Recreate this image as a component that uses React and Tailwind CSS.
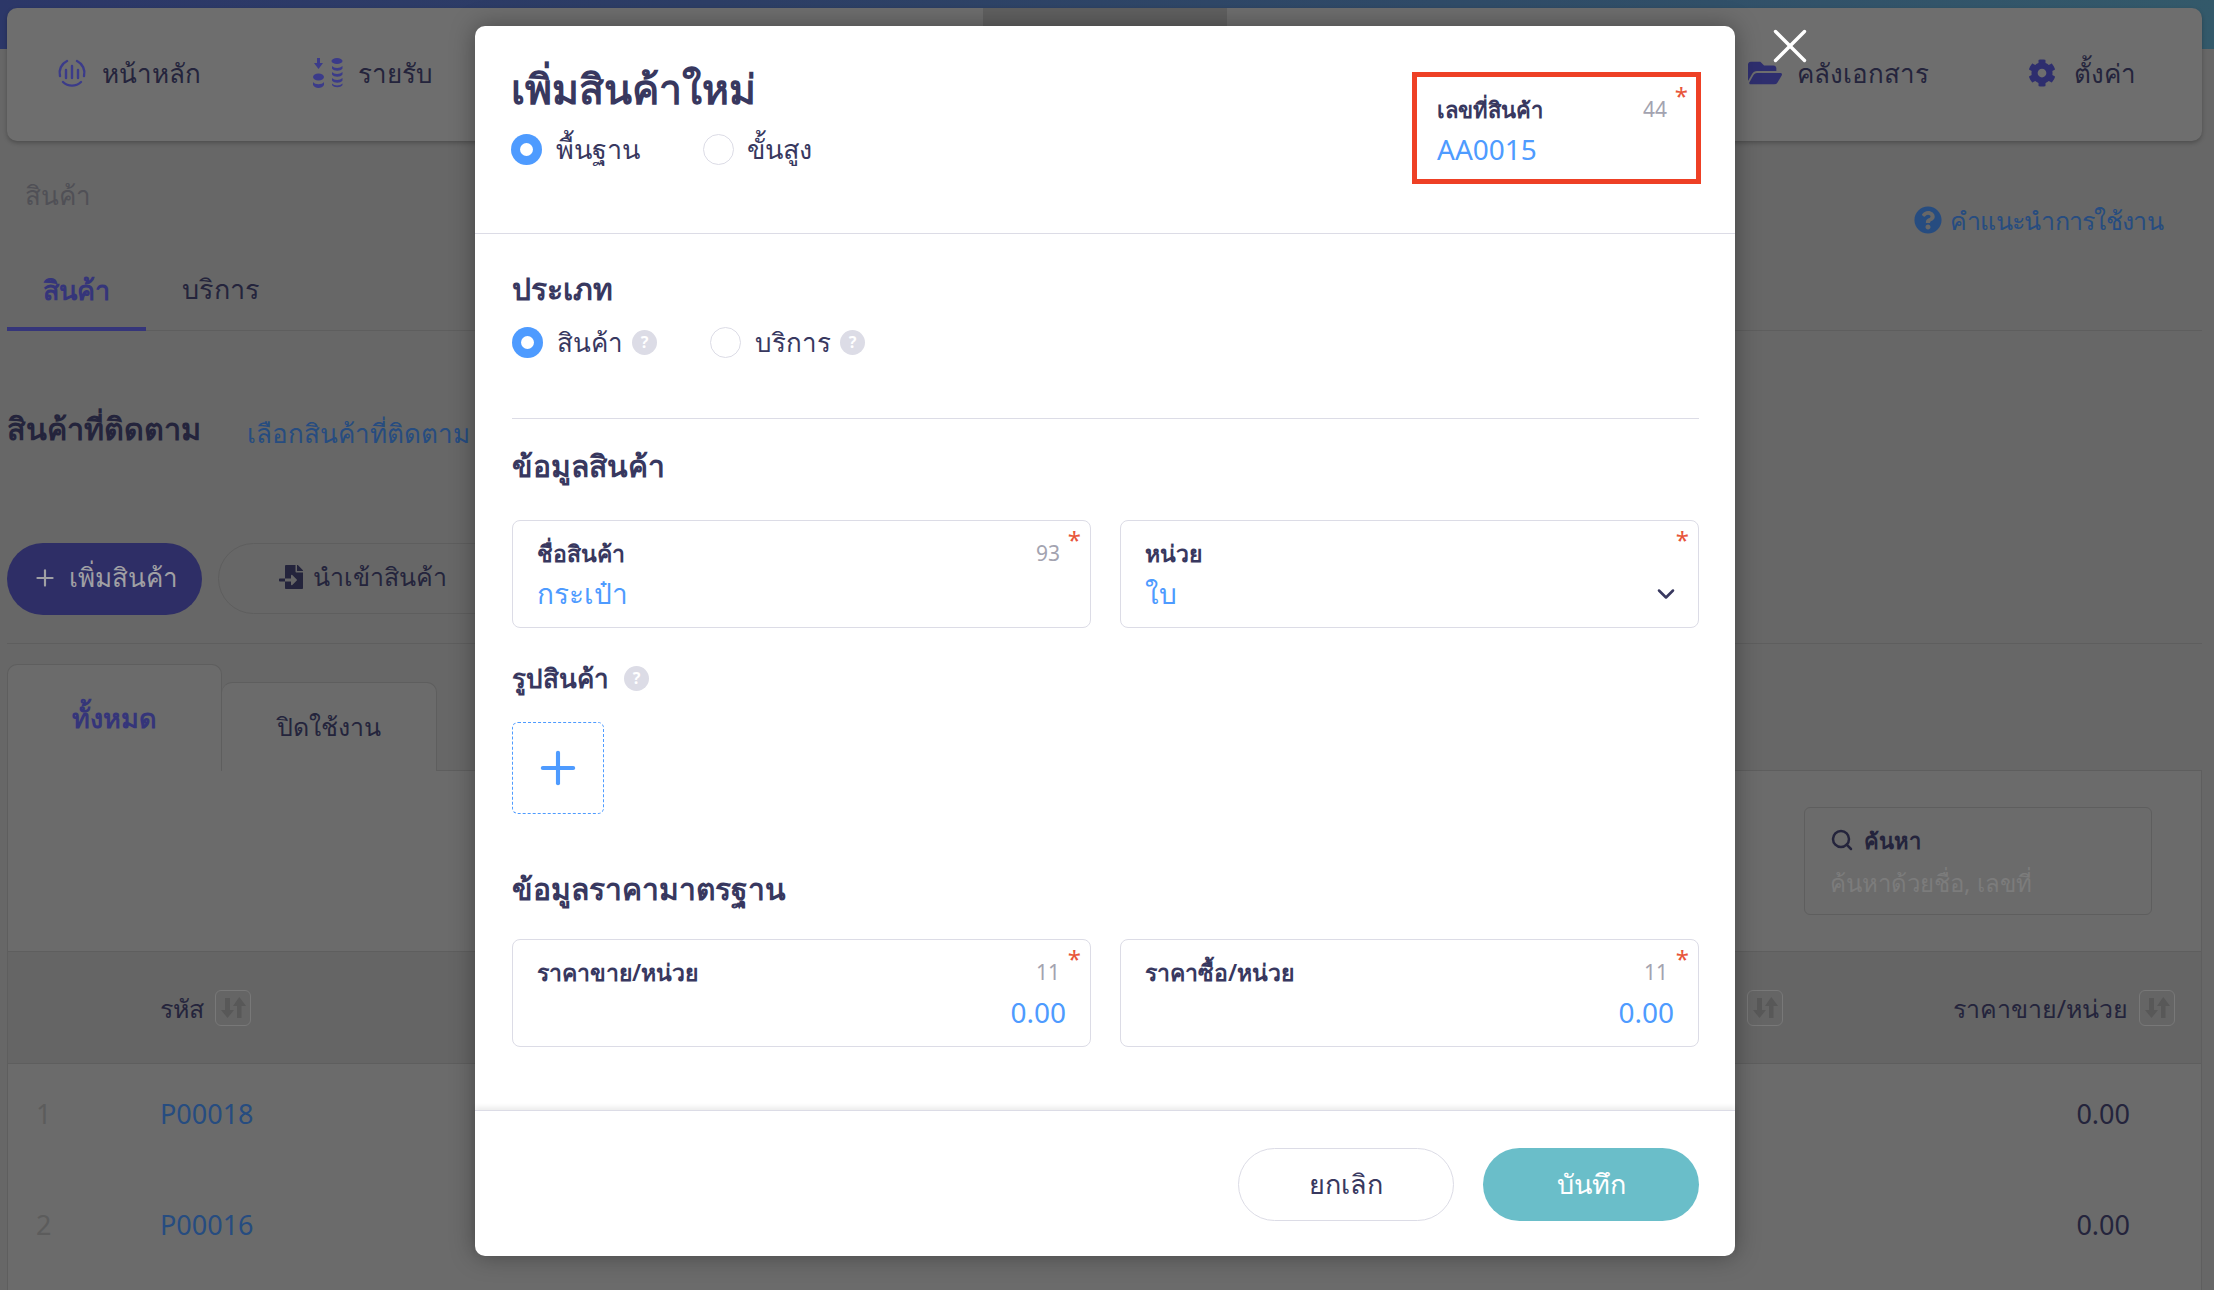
import React from "react";
import { FaFolderOpen, FaCog, FaFileImport, FaQuestionCircle } from "react-icons/fa";
import { Search, X, ChevronDown, Plus } from "lucide-react";

const Sort = ({ className }) => (
  <span className={"flex h-[36px] w-[36px] shrink-0 items-center justify-center rounded-[6px] border border-[#787878] " + (className || "")}>
    <svg width="28" height="28" viewBox="0 0 28 28" fill="#585858">
      <path d="M6 4h5v12h4l-6.500 8L2 16h4z" />
      <path d="M18 24h4.500V12H27l-6.700-9L14 12h4z" />
    </svg>
  </span>
);

const Help = ({ className }) => (
  <span className={"flex h-[25px] w-[25px] shrink-0 items-center justify-center rounded-full bg-[#dcdce6] text-[16px] font-bold leading-none text-white " + (className || "")}>?</span>
);

const Radio = ({ on, className }) =>
  on ? (
    <span className={"flex h-[31px] w-[31px] shrink-0 items-center justify-center rounded-full bg-[#4e9bff] " + (className || "")}>
      <span className="h-[13px] w-[13px] rounded-full bg-white" />
    </span>
  ) : (
    <span className={"block h-[31px] w-[31px] shrink-0 rounded-full border border-[#dcdce6] " + (className || "")} />
  );

const Star = ({ className }) => (
  <span className={"absolute text-[24px] leading-none text-[#e8553a] " + (className || "right-[9px] top-[7px]")}>*</span>
);

const Field = ({ label, count, value, right, chevron }) => (
  <div className="relative h-[108px] flex-1 rounded-[8px] border border-[#dcdce6] px-[24px] pt-[16px]">
    <div className="flex items-center justify-between pr-[6px]">
      <span className="text-[23px] font-semibold leading-[32px] text-[#38385f]">{label}</span>
      {count && <span className="text-[21px] leading-[32px] text-[#a3a3b0]">{count}</span>}
    </div>
    <div className={"mt-[6px] text-[28px] leading-[36px] text-[#4e9bff] " + (right ? "text-right" : "")}>{value}</div>
    {chevron && <ChevronDown className="absolute right-[18px] top-[59px] text-[#38385f]" size={28} strokeWidth={2.2} />}
    <Star />
  </div>
);

const Nav = ({ icon, label, className, gap }) => (
  <div className={"flex items-center " + (gap || "gap-[15px] ") + " " + (className || "")}>
    {icon}
    <span className="text-[26px] leading-[40px] text-[#24243c]">{label}</span>
  </div>
);

export default function App() {
  return (
    <div className="relative h-[1290px] w-[2214px] overflow-hidden bg-[#676767] font-['Noto_Sans',sans-serif] text-[#22223a]">
      {/* top bar + nav */}
      <div className="bg-[linear-gradient(90deg,#2c3768_0%,#2d3e66_32%,#33596a_100%)] bg-[length:100%_49px] bg-no-repeat pl-[7px] pr-[12px] pt-[8px]">
        <div className="relative flex h-[133px] items-start rounded-[10px] bg-[#6e6e6e] pl-[50px] pr-[66px] pt-[45px] shadow-[0_2px_4px_rgba(0,0,0,.25)]">
          <span className="absolute bottom-0 left-[976px] top-0 w-[244px] bg-[#606060]" />
          <Nav
            label="หน้าหลัก"
            icon={
              <svg width="30" height="30" viewBox="0 0 30 30" fill="none" stroke="#3b3b8a" strokeWidth="2.400" strokeLinecap="round">
                <path d="M10 3a13 13 0 0 0-7 15M20 3a13 13 0 0 1 7 15M6 24a13 13 0 0 0 18 0" />
                <path d="M9 12v8M15 8v12M21 12v8" />
              </svg>
            }
          />
          <Nav
            className="ml-[112px]"
            label="รายรับ"
            icon={
              <svg width="30" height="30" viewBox="0 0 30 30" fill="#3b3b8a">
                <path d="M4 0h3v5h3l-4.500 6L1 5h3z" />
                <ellipse cx="5.500" cy="19" rx="5.500" ry="3.500" />
                <path d="M0 24c2 3 9 3 11 0v3c-2 4-9 4-11 0z" />
                <ellipse cx="24" cy="3" rx="5.500" ry="3" />
                <path d="M19 8c2 2.500 8 2.500 10.500 0v2.500c-2 3-8.500 3-10.500 0zM19 14c2 2.500 8 2.500 10.500 0v2.500c-2 3-8.500 3-10.500 0zM19 20c2 2.500 8 2.500 10.500 0v2.500c-2 3-8.500 3-10.500 0zM19 25.500c2 2.500 8 2.500 10.500 0V27c-2 3-8.500 3-10.500 0z" />
              </svg>
            }
          />
          <Nav className="ml-auto" label="คลังเอกสาร" icon={<FaFolderOpen size={34} color="#2e2e6e" />} />
          <Nav className="ml-[99px]" gap="gap-[18px]" label="ตั้งค่า" icon={<FaCog size={28} color="#2e2e6e" />} />
        </div>
      </div>

      <div className="pl-[7px] pr-[12px]">
        {/* breadcrumb */}
        <div className="flex h-[99px] justify-between">
          <span className="pl-[18px] pt-[34px] text-[26px] leading-[40px] text-[#505056]">สินค้า</span>
          <div className="flex items-center gap-[8px] pr-[39px] pt-[58px]">
            <FaQuestionCircle size={28} color="#264c80" />
            <span className="text-[25px] leading-[40px] tracking-[-0.7px] text-[#264c80]">คำแนะนำการใช้งาน</span>
          </div>
        </div>

        {/* tabs */}
        <div className="flex h-[91px] items-end border-b border-[#5e5e5e]">
          <div className="-mb-[1px] flex h-[74px] w-[139px] justify-center border-b-[4px] border-[#35357a] pt-[13px]">
            <span className="text-[27px] font-semibold leading-[40px] text-[#35357a]">สินค้า</span>
          </div>
          <div className="flex h-[74px] pl-[36px] pt-[13px]">
            <span className="text-[27px] leading-[40px] text-[#24243c]">บริการ</span>
          </div>
        </div>

        {/* followed */}
        <div className="mt-[80px] flex h-[40px] items-center">
          <span className="-mt-[6px] text-[30.500px] font-semibold leading-[40px] text-[#24243c]">สินค้าที่ติดตาม</span>
          <span className="ml-[46px] pt-[4px] text-[26px] leading-[40px] text-[#264c80]">เลือกสินค้าที่ติดตาม</span>
        </div>

        {/* buttons */}
        <div className="mt-[92px] flex h-[101px] gap-[16px] border-b border-[#5e5e5e]">
          <div className="flex h-[72px] w-[195px] items-center justify-center gap-[11px] rounded-full bg-[#2e2e66] pb-[3px] text-[26px] text-[#a0a0a4]">
            <Plus size={26} strokeWidth={2} />
            <span>เพิ่มสินค้า</span>
          </div>
          <div className="flex h-[71px] w-[300px] items-center gap-[10px] rounded-full border border-[#5e5e5e] pb-[3px] pl-[60px] text-[25px] text-[#24243c]">
            <FaFileImport size={24} />
            <span>นำเข้าสินค้า</span>
          </div>
        </div>

        {/* status tabs */}
        <div className="mt-[20px] flex h-[107px] items-end border-b border-[#5e5e5e]">
          <div className="-mb-[1px] flex h-[107px] w-[215px] justify-center rounded-t-[10px] border border-b-0 border-[#5e5e5e] bg-[#6b6b6b] pt-[33px]">
            <span className="text-[27px] font-semibold leading-[40px] text-[#35357a]">ทั้งหมด</span>
          </div>
          <div className="-mb-[1px] flex h-[89px] w-[215px] justify-center rounded-t-[10px] border border-b-0 border-l-0 border-[#5e5e5e] bg-[#6b6b6b] pt-[23px]">
            <span className="text-[25px] leading-[40px] text-[#24243c]">ปิดใช้งาน</span>
          </div>
        </div>

        {/* panel */}
        <div className="h-[520px] border-x border-[#5e5e5e] bg-[#6b6b6b]">
          <div className="flex h-[180px] justify-end pr-[49px] pt-[36px]">
            <div className="h-[108px] w-[348px] rounded-[6px] border border-[#5e5e5e] px-[25px] pt-[16px]">
              <div className="flex items-center gap-[10px]">
                <Search size={24} strokeWidth={2.500} color="#24243c" />
                <span className="text-[22px] font-semibold leading-[32px] text-[#24243c]">ค้นหา</span>
              </div>
              <div className="mt-[9px] text-[24px] leading-[36px] text-[#7c7c7c]">ค้นหาด้วยชื่อ, เลขที่</div>
            </div>
          </div>
          <div className="flex h-[113px] items-center border-y border-[#5e5e5e] bg-[#656565] pl-[152px] pr-[26px]">
            <span className="text-[25px] leading-[40px] text-[#24243c]">รหัส</span>
            <Sort className="ml-[11px]" />
            <Sort className="ml-auto" />
            <span className="ml-[170px] text-[25px] leading-[40px] text-[#24243c]">ราคาขาย/หน่วย</span>
            <Sort className="ml-[11px]" />
          </div>
          {[["1", "P00018"], ["2", "P00016"]].map(([n, c]) => (
            <div key={n} className="flex h-[111px] items-center pb-[11px] pr-[71px] text-[27px]">
              <span className="w-[152px] pl-[28px] text-[#5c5c5c]">{n}</span>
              <span className="text-[#264c80]">{c}</span>
              <span className="ml-auto text-[#24243c]">0.00</span>
            </div>
          ))}
        </div>
      </div>

      {/* modal */}
      <div className="absolute left-[475px] top-[26px] flex h-[1230px] w-[1260px] flex-col rounded-[10px] bg-white shadow-[0_0_24px_rgba(0,0,0,.35)]">
        <div className="flex h-[208px] shrink-0 justify-between border-b border-[#dcdce6] pl-[36px] pr-[34px]">
          <div className="pt-[32px]">
            <div className="text-[41px] font-semibold leading-[60px] text-[#38385f]">เพิ่มสินค้าใหม่</div>
            <div className="mt-[11px] flex items-center">
              <Radio on />
              <span className="ml-[14px] text-[27px] leading-[40px] text-[#38385f]">พื้นฐาน</span>
              <Radio className="ml-[63px]" />
              <span className="ml-[13px] text-[27px] leading-[40px] text-[#38385f]">ขั้นสูง</span>
            </div>
          </div>
          <div className="relative mt-[46px] h-[112px] w-[289px] border-[5px] border-[#ee4025] pl-[20px] pr-[29px] pt-[16px]">
            <div className="flex items-center justify-between">
              <span className="text-[22px] font-semibold leading-[32px] text-[#38385f]">เลขที่สินค้า</span>
              <span className="text-[21px] leading-[32px] text-[#a3a3b0]">44</span>
            </div>
            <div className="mt-[6px] text-[28px] leading-[36px] text-[#4e9bff]">AA0015</div>
            <Star className="right-[8px] top-[7px]" />
          </div>
        </div>

        <div className="flex-1 pl-[37px] pr-[36px]">
          <div className="pt-[33px] text-[30px] font-semibold leading-[44px] text-[#38385f]">ประเภท</div>
          <div className="mt-[15px] flex items-center border-b border-[#dcdce6] pb-[60px]">
            <Radio on />
            <span className="ml-[14px] text-[26px] leading-[32px] text-[#38385f]">สินค้า</span>
            <Help className="ml-[9px]" />
            <Radio className="ml-[53px]" />
            <span className="ml-[14px] text-[26px] leading-[32px] text-[#38385f]">บริการ</span>
            <Help className="ml-[9px]" />
          </div>

          <div className="pt-[25px] text-[30px] font-semibold leading-[44px] text-[#38385f]">ข้อมูลสินค้า</div>
          <div className="mt-[32px] flex gap-[29px]">
            <Field label="ชื่อสินค้า" count="93" value="กระเป๋า" />
            <Field label="หน่วย" value="ใบ" chevron />
          </div>

          <div className="mt-[31px] flex items-center gap-[15px]">
            <span className="text-[26px] font-semibold leading-[38px] text-[#38385f]">รูปสินค้า</span>
            <Help />
          </div>
          <div className="mt-[25px] flex h-[92px] w-[92px] items-center justify-center rounded-[6px] border border-dashed border-[#4e9bff]">
            <Plus size={52} strokeWidth={1.900} color="#4e9bff" />
          </div>

          <div className="mt-[53px] text-[30px] font-semibold leading-[44px] text-[#38385f]">ข้อมูลราคามาตรฐาน</div>
          <div className="mt-[28px] flex gap-[29px]">
            <Field label="ราคาขาย/หน่วย" count="11" value="0.00" right />
            <Field label="ราคาซื้อ/หน่วย" count="11" value="0.00" right />
          </div>
        </div>

        <div className="flex h-[146px] shrink-0 justify-end gap-[29px] border-t border-[#dcdce6] pr-[36px] pt-[37px] shadow-[0_-3px_5px_rgba(0,0,0,.08)]">
          <div className="flex h-[73px] w-[216px] items-center justify-center rounded-full border border-[#dcdce6] text-[27px] text-[#38385f]">ยกเลิก</div>
          <div className="flex h-[73px] w-[216px] items-center justify-center rounded-full bg-[#6abec9] text-[27px] text-white">บันทึก</div>
        </div>
      </div>

      {/* close */}
      <X className="absolute left-[1761px] top-[17px] text-white" size={58} strokeWidth={1.400} />
    </div>
  );
}
